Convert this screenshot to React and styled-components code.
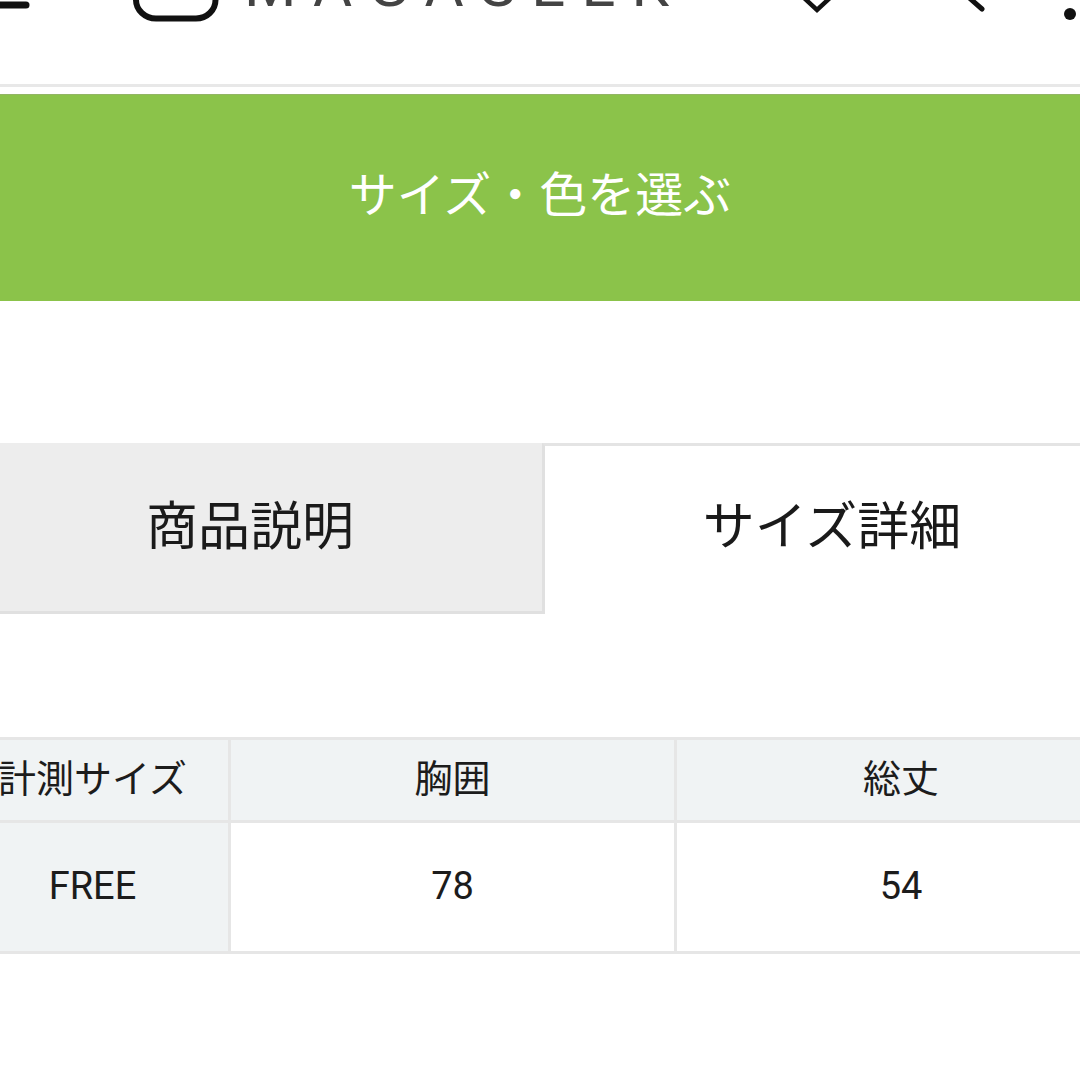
import React from "react";
import styled, { createGlobalStyle } from "styled-components";

const Global = createGlobalStyle`
  * { box-sizing: border-box; }
  html, body { margin: 0; padding: 0; background: #fff; }
  body { font-family: "Roboto", "Noto Sans CJK JP", sans-serif; color: #1c1c1c; overflow: hidden; }
`;

const Page = styled.div`
  width: 1080px;
  height: 1080px;
  overflow: hidden;
  background: #fff;
`;

// the screenshot starts part way down the header, so the bar sticks out above the page
const Header = styled.header`
  display: flex;
  align-items: flex-start;
  height: 127px;
  margin-top: -40px;
  border-bottom: 3px solid #e8e8e8;
  overflow: hidden;
`;

const Icon = styled.svg`
  flex: none;
  height: 70px;
  width: ${(p) => p.$w}px;
  margin-left: ${(p) => (p.$auto ? "auto" : `${p.$left || 0}px`)};
  fill: none;
  stroke: #111;
`;

const Logo = styled.div`
  margin-left: 24px;
  font-size: 60px;
  line-height: 51px;
  letter-spacing: 16px;
  color: #444;
  font-weight: 400;
  white-space: nowrap;
`;

const BuyBar = styled.button`
  display: flex;
  align-items: center;
  justify-content: center;
  width: 100%;
  height: 207px;
  margin: 7px 0 0;
  padding: 0 0 14px;
  border: 0;
  border-top: 1px solid #93b565;
  background: #8bc34a;
  color: #fff;
  font: 400 48px "Noto Sans CJK JP", sans-serif;
`;

const Tabs = styled.div`
  display: grid;
  grid-template-columns: 584px 582px;
  height: 171px;
  margin: 142px 0 0 -42px;
`;

const Tab = styled.div`
  display: flex;
  align-items: center;
  justify-content: center;
  font: 400 52px "Noto Sans CJK JP", sans-serif;
  color: #1a1a1a;
  background: ${(p) => (p.$active ? "#fff" : "#ededed")};
  border-top: ${(p) => (p.$active ? "3px solid #e4e4e4" : "0")};
  border-left: ${(p) => (p.$active ? "3px solid #e0e0e0" : "0")};
  border-bottom: ${(p) => (p.$active ? "0" : "3px solid #e0e0e0")};
  padding-bottom: ${(p) => (p.$active ? "15px" : "10px")};
  padding-right: ${(p) => (p.$active ? "5px" : "0")};
`;

const SizeTable = styled.div`
  display: grid;
  grid-template-columns: 274px 446px 448px;
  grid-template-rows: 83px 128px;
  width: 1168px;
  margin: 123px 0 0 -43px;
  border-top: 3px solid #e6e6e6;
  border-bottom: 3px solid #e6e6e6;
`;

const Cell = styled.div`
  display: flex;
  align-items: center;
  justify-content: center;
  padding-bottom: ${(p) => (p.$top ? "10px" : "2px")};
  background: ${(p) => (p.$shade ? "#f0f3f4" : "#fff")};
  border-right: ${(p) => (p.$last ? "0" : "3px solid #e6e6e6")};
  border-bottom: ${(p) => (p.$top ? "3px solid #e6e6e6" : "0")};
  font: 400 38px "Roboto", "Noto Sans CJK JP", sans-serif;
  color: #1c1c1c;
  white-space: nowrap;
`;

const App = () => (
  <Page>
    <Global />
    <Header>
      <Icon $w={32} viewBox="0 -40 32 70">
        <path d="M-8 5H26" strokeWidth="7" strokeLinecap="round" />
      </Icon>
      <Icon $w={88} $left={100} viewBox="132 -40 88 70">
        <path
          d="M136 -12V0C136 10 145 18.5 156 18.5H196C207 18.5 215.5 10 215.5 0V-12"
          strokeWidth="6"
        />
      </Icon>
      <Logo>MAGASEEK</Logo>
      <Icon $w={40} $auto viewBox="798 -40 40 70">
        <path d="M802 -4L817 10L832 -4" strokeWidth="4.5" />
      </Icon>
      <Icon $w={30} $left={122} viewBox="960 -40 30 70">
        <path d="M966 -5L982 9" strokeWidth="5" strokeLinecap="round" />
      </Icon>
      <Icon $w={20} $left={70} viewBox="1060 -40 20 70">
        <circle cx="1070" cy="14" r="6" fill="#111" stroke="none" />
        <circle cx="1070" cy="-6" r="6" fill="#111" stroke="none" />
      </Icon>
    </Header>
    <BuyBar>サイズ・色を選ぶ</BuyBar>
    <Tabs>
      <Tab>商品説明</Tab>
      <Tab $active>サイズ詳細</Tab>
    </Tabs>
    <SizeTable>
      <Cell $shade $top>計測サイズ</Cell>
      <Cell $shade $top>胸囲</Cell>
      <Cell $shade $top $last>総丈</Cell>
      <Cell $shade>FREE</Cell>
      <Cell>78</Cell>
      <Cell $last>54</Cell>
    </SizeTable>
  </Page>
);

export default App;
